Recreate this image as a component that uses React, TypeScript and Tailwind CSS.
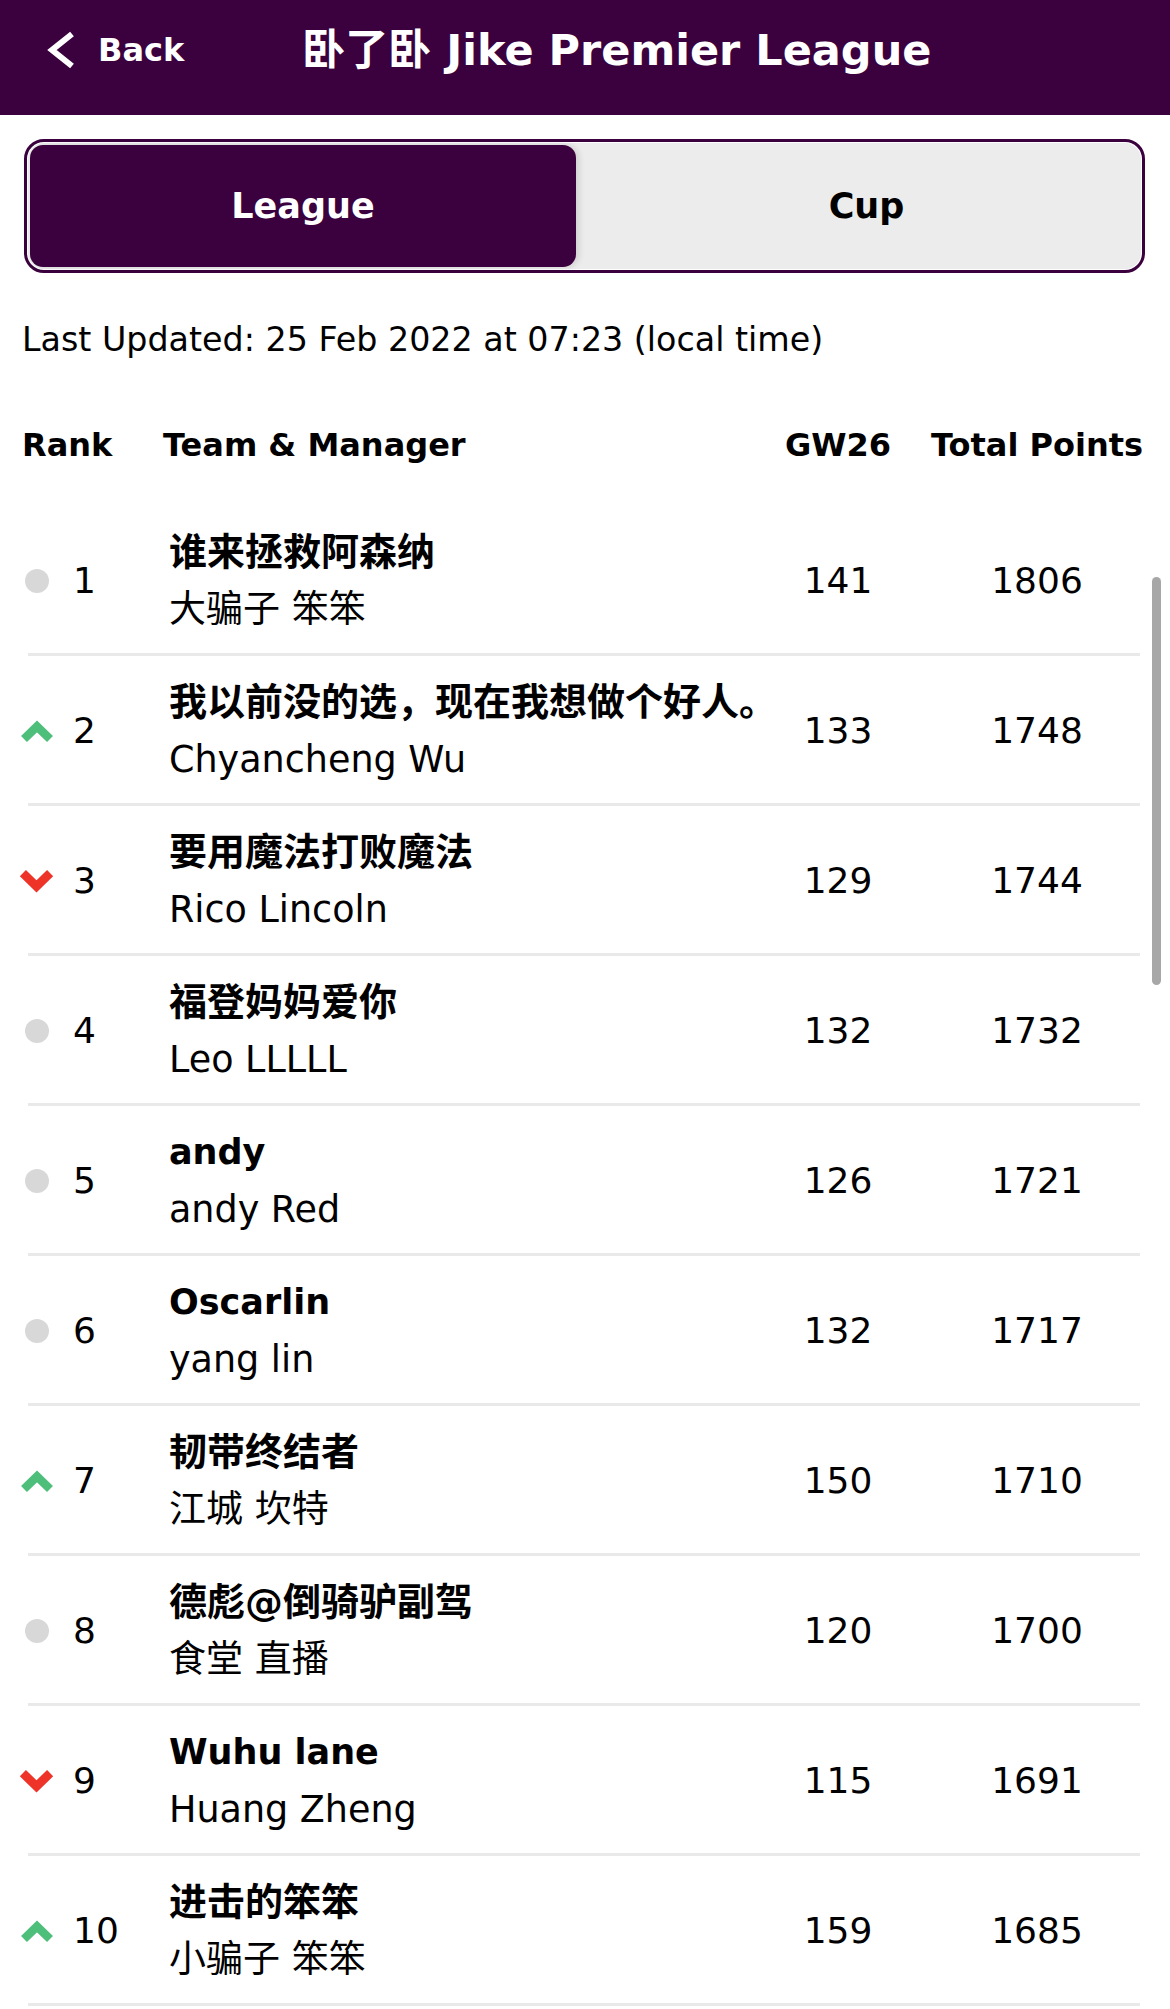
import React from "react";

type Move = "same" | "up" | "down";
type Row = {
  rank: number;
  team: string;
  teamCjk: boolean;
  manager: string;
  managerCjk: boolean;
  gw: number;
  total: number;
  move: Move;
};

const rows: Row[] = [
  { rank: 1, team: "谁来拯救阿森纳", teamCjk: true, manager: "大骗子 笨笨", managerCjk: true, gw: 141, total: 1806, move: "same" },
  { rank: 2, team: "我以前没的选，现在我想做个好人。", teamCjk: true, manager: "Chyancheng Wu", managerCjk: false, gw: 133, total: 1748, move: "up" },
  { rank: 3, team: "要用魔法打败魔法", teamCjk: true, manager: "Rico Lincoln", managerCjk: false, gw: 129, total: 1744, move: "down" },
  { rank: 4, team: "福登妈妈爱你", teamCjk: true, manager: "Leo LLLLL", managerCjk: false, gw: 132, total: 1732, move: "same" },
  { rank: 5, team: "andy", teamCjk: false, manager: "andy Red", managerCjk: false, gw: 126, total: 1721, move: "same" },
  { rank: 6, team: "Oscarlin", teamCjk: false, manager: "yang lin", managerCjk: false, gw: 132, total: 1717, move: "same" },
  { rank: 7, team: "韧带终结者", teamCjk: true, manager: "江城 坎特", managerCjk: true, gw: 150, total: 1710, move: "up" },
  { rank: 8, team: "德彪@倒骑驴副驾", teamCjk: true, manager: "食堂 直播", managerCjk: true, gw: 120, total: 1700, move: "same" },
  { rank: 9, team: "Wuhu lane", teamCjk: false, manager: "Huang Zheng", managerCjk: false, gw: 115, total: 1691, move: "down" },
  { rank: 10, team: "进击的笨笨", teamCjk: true, manager: "小骗子 笨笨", managerCjk: true, gw: 159, total: 1685, move: "up" },
];

function MoveIcon({ move }: { move: Move }) {
  if (move === "up") {
    return (
      <svg width="34" height="24" viewBox="0 0 34 24">
        <polyline points="4,20 17,7.5 30,20" fill="none" stroke="#4dbf7b" strokeWidth="8.5" strokeLinejoin="miter" />
      </svg>
    );
  }
  if (move === "down") {
    return (
      <svg width="36" height="26" viewBox="0 0 36 26">
        <polyline points="4,5 18,18.5 32,5" fill="none" stroke="#ee3329" strokeWidth="9" strokeLinejoin="miter" />
      </svg>
    );
  }
  return <div className="h-[24px] w-[24px] rounded-full bg-[#d8d8d8]" />;
}

export default function App() {
  return (
    <div className="relative h-[2009px] w-[1170px] overflow-hidden bg-white font-['DejaVu_Sans','Noto_Sans_CJK_SC',sans-serif] text-black">
      {/* Top bar */}
      <div className="flex h-[115px] items-center bg-[#3a013e] pb-[16px] text-white">
        <div className="ml-[46px] flex items-center">
          <svg width="30" height="38" viewBox="0 0 30 38">
            <polyline points="26,3 6,19 26,35" fill="none" stroke="#ffffff" strokeWidth="6" strokeLinejoin="miter" />
          </svg>
          <span className="ml-[22px] text-[32px] font-bold leading-[40px]">Back</span>
        </div>
        <div className="ml-[118px] whitespace-nowrap text-[43px] font-bold leading-[50px]">卧了卧 Jike Premier League</div>
      </div>

      {/* Tabs */}
      <div className="ml-[24px] mt-[24px] h-[134px] w-[1121px] rounded-[20px] border-[3px] border-[#3a013e] bg-white p-[1px]">
        <div className="flex h-full w-full rounded-[16px] bg-[#ececec] p-[2px]">
          <div className="flex h-full w-[546px] items-center justify-center rounded-[13px] bg-[#3a013e] text-[35px] font-bold text-white shadow-[3px_0_6px_rgba(0,0,0,0.12)]">
            League
          </div>
          <div className="flex flex-1 items-center justify-center pl-[18px] text-[35px] font-bold">Cup</div>
        </div>
      </div>

      {/* Last updated */}
      <div className="ml-[22px] mt-[47px] h-[40px] text-[33.3px] leading-[40px]">Last Updated: 25 Feb 2022 at 07:23 (local time)</div>

      {/* Column headers */}
      <div className="mt-[65px] flex h-[40px] items-center text-[32px] font-bold leading-[40px]">
        <div className="ml-[22px] w-[141px]">Rank</div>
        <div className="min-w-0 flex-1">Team &amp; Manager</div>
        <div className="flex w-[196px] justify-center whitespace-nowrap">GW26</div>
        <div className="flex w-[202px] justify-center whitespace-nowrap">Total Points</div>
        <div className="w-[32px]" />
      </div>

      {/* Rows */}
      <div className="mt-[41px]">
        {rows.map((r) => (
          <div key={r.rank}>
            <div className="flex h-[147px] items-center">
              <div className="ml-[19px] flex w-[35px] justify-center pt-[2px]">
                <MoveIcon move={r.move} />
              </div>
              <div className="ml-[19px] w-[96px] pt-[2px] text-[36px] leading-[40px]">{r.rank}</div>
              <div className="flex min-w-0 flex-1 flex-col pt-[3px]">
                <div className={`whitespace-nowrap font-bold leading-[57px] ${r.teamCjk ? "text-[38px]" : "text-[35px]"}`}>{r.team}</div>
                <div className={`whitespace-nowrap leading-[57px] ${r.managerCjk ? "text-[37px]" : "text-[36.5px]"}`}>{r.manager}</div>
              </div>
              <div className="flex w-[196px] justify-center pt-[2px] text-[36px] leading-[40px]">{r.gw}</div>
              <div className="flex w-[202px] justify-center pt-[2px] text-[36px] leading-[40px]">{r.total}</div>
              <div className="w-[32px]" />
            </div>
            <div className="ml-[28px] h-[3px] w-[1112px] bg-[#e9e9e9]" />
          </div>
        ))}
      </div>

      {/* Scrollbar overlay */}
      <div className="absolute left-[1152px] top-[577px] h-[408px] w-[9px] rounded-full bg-[#a7a7a7]" />
    </div>
  );
}
